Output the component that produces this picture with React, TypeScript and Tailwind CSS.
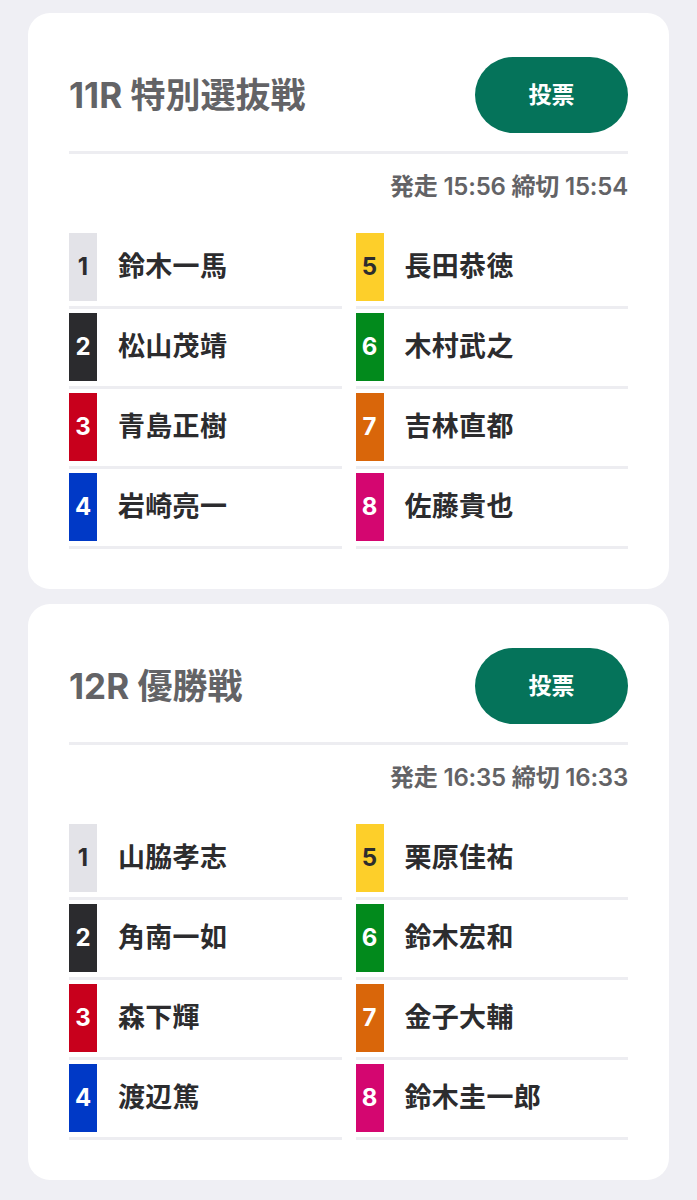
import React from "react";

type Racer = { n: number; name: string };
type Race = { title: string; time: string; racers: Racer[] };

const badge: Record<number, string> = {
  1: "bg-[#e3e3e8] text-[#2c2c2e]",
  2: "bg-[#2b2b2e] text-white",
  3: "bg-[#c8001c] text-white",
  4: "bg-[#0039c6] text-white",
  5: "bg-[#fdcf2a] text-[#2c2c2e]",
  6: "bg-[#028a1c] text-white",
  7: "bg-[#d9660a] text-white",
  8: "bg-[#d40670] text-white",
};

const races: Race[] = [
  {
    title: "11R 特別選抜戦",
    time: "発走 15:56 締切 15:54",
    racers: [
      { n: 1, name: "鈴木一馬" },
      { n: 2, name: "松山茂靖" },
      { n: 3, name: "青島正樹" },
      { n: 4, name: "岩崎亮一" },
      { n: 5, name: "長田恭徳" },
      { n: 6, name: "木村武之" },
      { n: 7, name: "吉林直都" },
      { n: 8, name: "佐藤貴也" },
    ],
  },
  {
    title: "12R 優勝戦",
    time: "発走 16:35 締切 16:33",
    racers: [
      { n: 1, name: "山脇孝志" },
      { n: 2, name: "角南一如" },
      { n: 3, name: "森下輝" },
      { n: 4, name: "渡辺篤" },
      { n: 5, name: "栗原佳祐" },
      { n: 6, name: "鈴木宏和" },
      { n: 7, name: "金子大輔" },
      { n: 8, name: "鈴木圭一郎" },
    ],
  },
];

const font = { fontFamily: '"Inter", "Noto Sans CJK JP", sans-serif' };

function Row({ r }: { r: Racer }) {
  return (
    <div className="flex flex-col">
      <div className="flex h-[68px] items-center">
        <div
          className={`flex h-full w-[28px] items-center justify-center text-[24px] font-bold ${badge[r.n]}`}
        >
          {r.n}
        </div>
        <div className="ml-[21px] text-[27px] font-semibold text-[#2c2c2e] tracking-[0.3px]">
          {r.name}
        </div>
      </div>
      <div className="mt-[5px] h-[3px] bg-[#ededf1]" />
    </div>
  );
}

function Card({ race }: { race: Race }) {
  const left = race.racers.slice(0, 4);
  const right = race.racers.slice(4);
  return (
    <div className="rounded-[22px] bg-white px-[41px] pt-[44px] pb-[40px]">
      <div className="flex items-center justify-between">
        <div className="text-[35px] font-bold text-[#636366] tracking-[0px] leading-[40px]">
          {race.title}
        </div>
        <button className="flex h-[76px] w-[153px] items-center justify-center rounded-full bg-[#05735a] text-[23px] font-bold text-white">
          投票
        </button>
      </div>
      <div className="mt-[18px] h-[3px] bg-[#ededf1]" />
      <div className="mt-[20px] text-right text-[24px] font-semibold text-[#636366] leading-[26px] tracking-[-0.2px]">
        {race.time}
      </div>
      <div className="mt-[33px] grid grid-cols-2 gap-x-[14px]">
        <div className="flex flex-col gap-[4px]">
          {left.map((r) => (
            <Row key={r.n} r={r} />
          ))}
        </div>
        <div className="flex flex-col gap-[4px]">
          {right.map((r) => (
            <Row key={r.n} r={r} />
          ))}
        </div>
      </div>
    </div>
  );
}

export default function App() {
  return (
    <div className="min-h-[1200px] bg-[#efeff4] px-[28px] pt-[13px] pb-[20px]" style={font}>
      <div className="flex flex-col gap-[15px]">
        {races.map((race) => (
          <Card key={race.title} race={race} />
        ))}
      </div>
    </div>
  );
}
